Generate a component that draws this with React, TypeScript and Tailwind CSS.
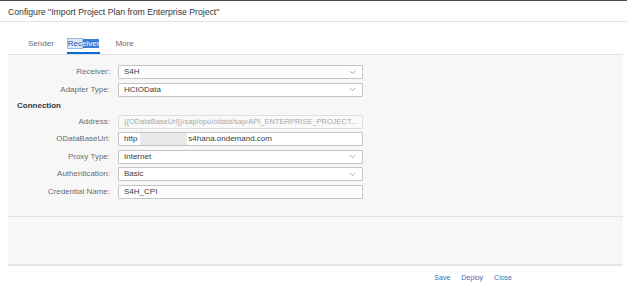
import { ChevronDown } from "lucide-react";

// One form row: right-aligned label, then input / select box
function Field({
  label,
  value,
  select,
  disabled,
  children,
}: {
  label: string;
  value?: string;
  select?: boolean;
  disabled?: boolean;
  children?: React.ReactNode;
}) {
  return (
    <div className="flex items-center h-[14px]">
      <div className="w-[103px] shrink-0 pr-[1px] text-right text-[8px] text-[#6a6d70]">{label}</div>
      <div
        className={
          disabled
            ? "ml-[7px] w-[245px] h-[14px] flex items-center rounded-[1px] border border-[#dedede] bg-[#f9f9f9] pl-[5px] pr-[8px] text-[7.5px] text-[#a9a9a9] overflow-hidden whitespace-nowrap"
            : "ml-[7px] w-[245px] h-[14px] flex items-center rounded-[1px] border border-[#c4c4c4] bg-white pl-[5px] pr-[5px] text-[8px] text-[#3a3d40] overflow-hidden whitespace-nowrap"
        }
      >
        <div className="flex-1 flex items-center">{children ?? value}</div>
        {select && <ChevronDown className="w-[9px] h-[9px] text-[#5b8fd0]" strokeWidth={2} />}
      </div>
    </div>
  );
}

export default function App() {
  return (
    <div className="w-[627px] h-[296px] bg-white overflow-hidden font-['Liberation_Sans',Arial,sans-serif] border-t border-[#4d4d4d]">
      {/* Dialog title */}
      <div className="h-[21px] flex items-center pt-[3px] px-[8px] text-[8.7px] text-[#32363a] border-b border-[#e2e2e2]">
        Configure "Import Project Plan from Enterprise Project"
      </div>

      {/* Tabs */}
      <div className="mx-[8px] w-[615px] h-[33px] flex items-end pl-[20px] gap-[14px] border-b border-[#e1e1e1] text-[8px] text-[#6a6d70]">
        <div className="h-[16px] pb-[6px]">Sender</div>
        <div className="h-[16px] pb-[6px] border-b-2 border-[#0a6ed1] -mx-[1px] px-[1px]">
          <span className="bg-[#dce8f8] text-[#1d5fb4] outline outline-[#9db9e0]">Rec</span>
          <span className="bg-[#3a7bd5] text-white">eiver</span>
        </div>
        <div className="h-[16px] pb-[6px] ml-[2px]">More</div>
      </div>

      {/* Form panel */}
      <div className="mx-[8px] w-[615px] h-[211px] bg-[#f7f7f7] flex flex-col border-b-2 border-[#e6e6e6]">
        <div className="h-[162px] pt-[10px] flex flex-col gap-[3.5px] border-b border-[#e2e2e2]">
          <Field label="Receiver:" value="S4H" select />
          <Field label="Adapter Type:" value="HCIOData" select />
          <div className="h-[11px] flex items-center pl-[9px] text-[8px] font-bold text-[#32363a]">Connection</div>
          <Field
            label="Address:"
            value="{{ODataBaseUrl}}/sap/opu/odata/sap/API_ENTERPRISE_PROJECT..."
            disabled
          />
          <Field label="ODataBaseUrl:">
            <span>http</span>
            <span className="ml-[3px] w-[47px] h-[12px] bg-[#e9e9e9]" />
            <span className="ml-[1px]">s4hana.ondemand.com</span>
          </Field>
          <Field label="Proxy Type:" value="Internet" select />
          <Field label="Authentication:" value="Basic" select />
          <Field label="Credential Name:" value="S4H_CPI" />
        </div>
      </div>

      {/* Footer actions */}
      <div className="h-[24px] flex items-center justify-end gap-[11px] pr-[115px] text-[7px] text-[#3b6fb4]">
        <button>Save</button>
        <button>Deploy</button>
        <button>Close</button>
      </div>
    </div>
  );
}
